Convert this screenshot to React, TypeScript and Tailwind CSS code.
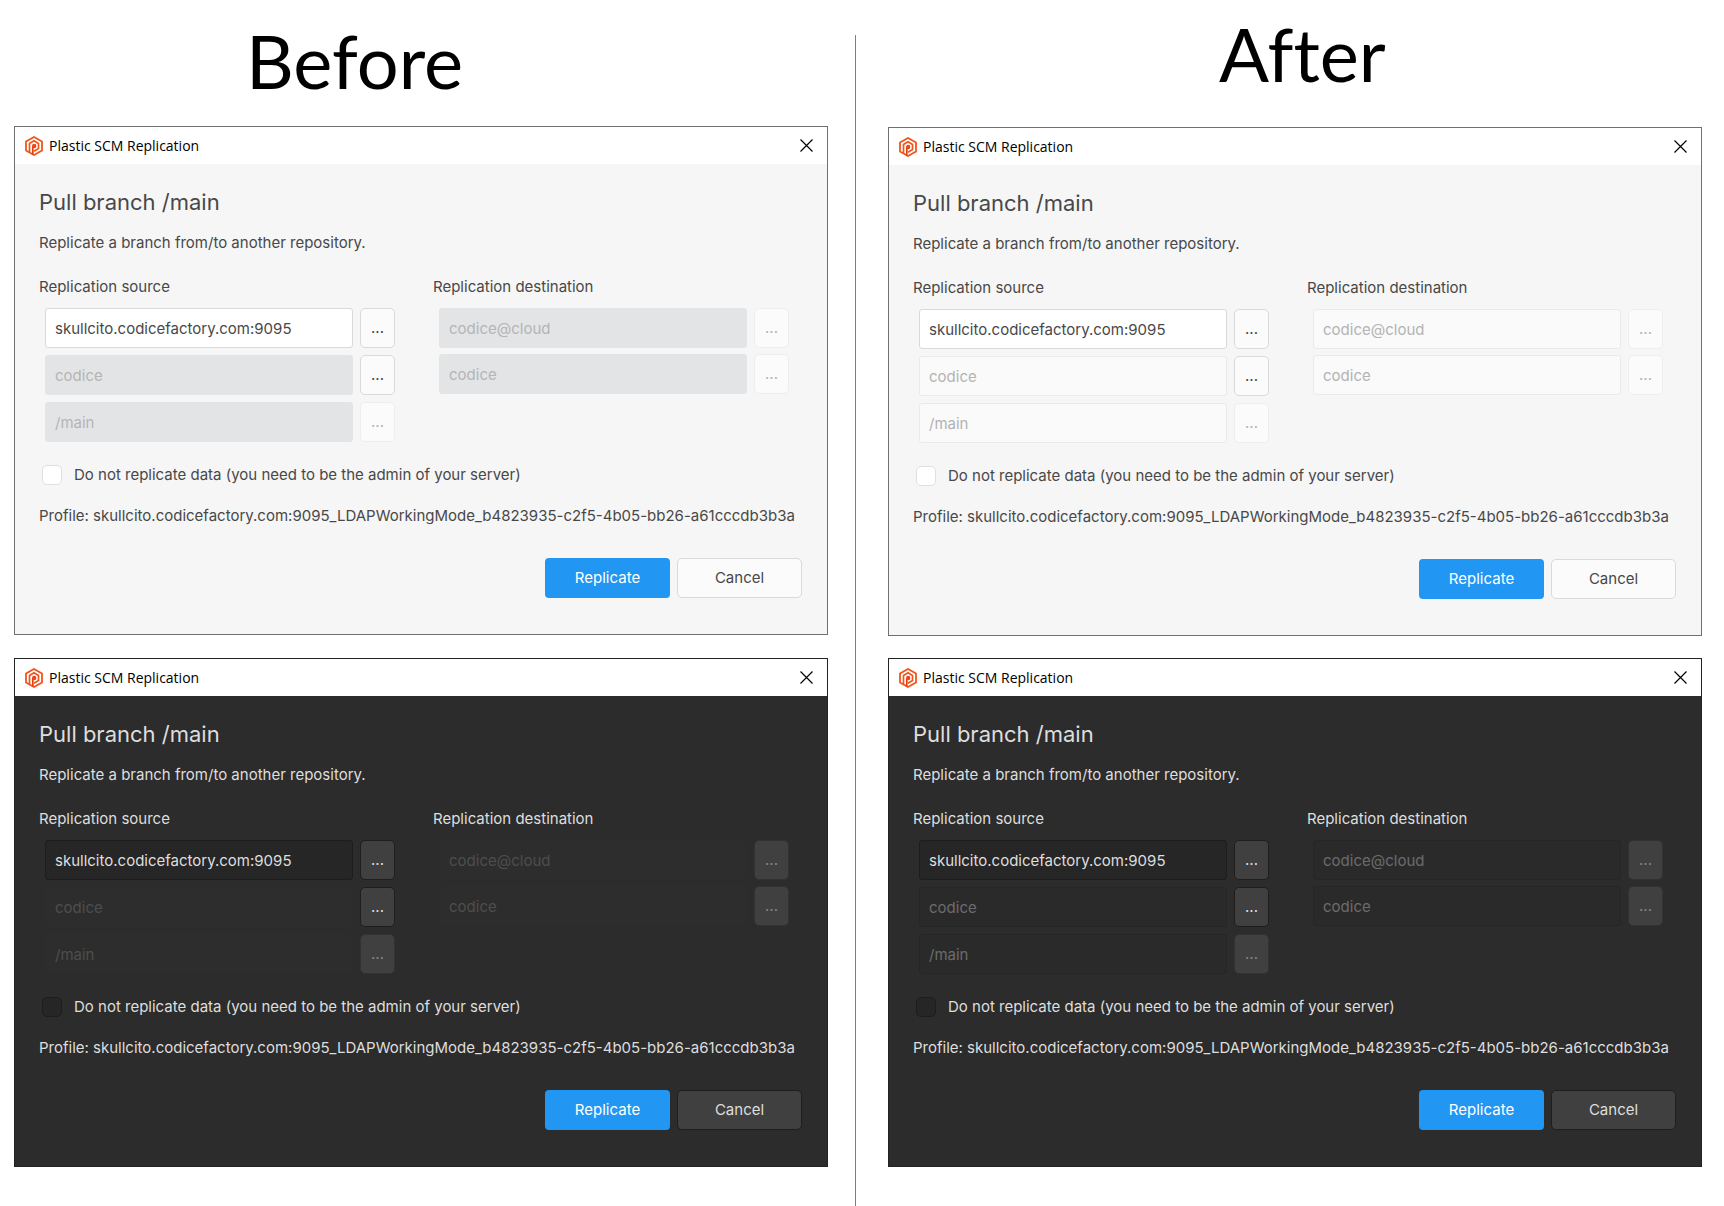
import { useId } from 'react'
import clsx from 'clsx'

type Theme = 'light' | 'dark'
type Variant = 'before' | 'after'

const INPUT_STYLES = {
  light: 'bg-white border-[#dadada] text-[#484848]',
  dark: 'bg-[#262626] border-[#1d1d1d] text-[#dedede]',
}

const DISABLED_INPUT_STYLES = {
  before: {
    light: 'bg-[#e3e4e5] border-[#e3e4e5] text-[#b4b5b6]',
    dark: 'bg-[#2d2d2d] border-[#2d2d2d] text-[#4e4e4e]',
  },
  after: {
    light: 'bg-[#fafafa] border-[#eaeaea] text-[#b3b3b3]',
    dark: 'bg-[#2a2a2a] border-[#262626] text-[#6c6c6c]',
  },
}

const BUTTON_STYLES = {
  light: 'bg-[#fbfbfb] border-[#dadada] text-[#484848] disabled:border-[#eeeeee] disabled:text-[#b3b3b3]',
  dark: 'bg-[#404040] border-[#1e1e1e] text-[#dedede] disabled:border-[#323232] disabled:text-[#858585]',
}

export default function App() {
  return (
    <main className="grid grid-cols-[856fr_868fr] min-h-screen bg-white font-['Inter',sans-serif]">
      <section className="flex pl-[14px]">
        <div className="flex-1 min-w-0 pr-[27px]">
          <h1 className="h-[126px] pl-[232px] pt-[17px] text-[74px] leading-[88px] text-black font-['Lato',sans-serif] [font-variant-ligatures:none]">Before</h1>
          <div className="flex flex-col gap-[23px]">
            <ReplicationDialog theme="light" variant="before" />
            <ReplicationDialog theme="dark" variant="before" />
          </div>
        </div>
        <div className="mt-[35px] w-px bg-[#7f7f7f]" />
      </section>

      <section className="pl-8 pr-[22px]">
        <h1 className="h-[127px] pl-[331px] pt-[10px] text-[74px] leading-[88px] text-black font-['Lato',sans-serif] [font-variant-ligatures:none]">After</h1>
        <div className="flex flex-col gap-[22px]">
          <ReplicationDialog theme="light" variant="after" />
          <ReplicationDialog theme="dark" variant="after" />
        </div>
      </section>
    </main>
  )
}

const ReplicationDialog = ({ theme, variant }: { theme: Theme; variant: Variant }) => {
  const checkboxId = useId()
  const light = theme === 'light'

  return (
    <article className={clsx('border', light ? 'border-[#707070]' : 'border-[#232323]')}>
      <header className="flex items-center justify-between h-[37px] pl-[10px] pr-[14px] bg-white">
        <div className="flex items-center gap-[6px]">
          <PlasticLogo />
          <span className="text-[14px] leading-5 text-black font-['Open_Sans',sans-serif]">Plastic SCM Replication</span>
        </div>
        <button type="button" aria-label="Close">
          <svg className="size-[13px]" viewBox="0 0 13 13" fill="none" stroke="#000" strokeWidth="1.2">
            <path d="M0.5 0.5L12.5 12.5M12.5 0.5L0.5 12.5" />
          </svg>
        </button>
      </header>

      <div
        className={clsx(
          'pl-6 pt-[22px] pb-[36px] text-[15px] leading-5',
          light ? 'bg-[#f6f6f6] text-[#484848]' : 'bg-[#2c2c2c] text-[#dedede]'
        )}
      >
        <h2 className="text-[22px] leading-8">Pull branch /main</h2>
        <p className="mt-[15px]">Replicate a branch from/to another repository.</p>

        <div className="grid grid-cols-2 mt-6">
          <fieldset>
            <legend>Replication source</legend>
            <div className="flex flex-col gap-[7px] mt-[11px] pl-[6px]">
              <FieldRow label="Source server" value="skullcito.codicefactory.com:9095" theme={theme} variant={variant} />
              <FieldRow label="Source repository" value="codice" theme={theme} variant={variant} disabled />
              <FieldRow label="Source branch" value="/main" theme={theme} variant={variant} disabled locked />
            </div>
          </fieldset>
          <fieldset>
            <legend>Replication destination</legend>
            <div className="flex flex-col gap-[6px] mt-[11px] pl-[6px]">
              <FieldRow label="Destination server" value="codice@cloud" theme={theme} variant={variant} disabled locked />
              <FieldRow label="Destination repository" value="codice" theme={theme} variant={variant} disabled locked />
            </div>
          </fieldset>
        </div>

        <div className="flex items-center gap-3 mt-[23px] pl-[3px]">
          <input
            id={checkboxId}
            type="checkbox"
            className={clsx(
              'appearance-none size-5 rounded-[5px] border',
              light ? 'bg-white border-[#dfdfdf]' : 'bg-[#262626] border-[#1d1d1d]'
            )}
          />
          <label htmlFor={checkboxId}>Do not replicate data (you need to be the admin of your server)</label>
        </div>

        <p className="mt-[21px] whitespace-nowrap">Profile: skullcito.codicefactory.com:9095_LDAPWorkingMode_b4823935-c2f5-4b05-bb26-a61cccdb3b3a</p>

        <div className="flex justify-end gap-[7px] mt-8 pr-[25px]">
          <button type="button" className="w-[125px] h-10 rounded-[4px] bg-[#2196f3] text-white">Replicate</button>
          <button type="button" className={clsx('w-[125px] h-10 rounded-[5px] border', BUTTON_STYLES[theme])}>Cancel</button>
        </div>
      </div>
    </article>
  )
}

type FieldRowProps = {
  label: string
  value: string
  theme: Theme
  variant: Variant
  disabled?: boolean
  locked?: boolean
}

const FieldRow = ({ label, value, theme, variant, disabled, locked }: FieldRowProps) => {
  return (
    <div className="flex gap-[7px] pr-[38px]">
      <input
        type="text"
        aria-label={label}
        defaultValue={value}
        disabled={disabled}
        className={clsx(
          'flex-1 min-w-0 h-10 px-[9px] rounded-[3px] border',
          disabled ? DISABLED_INPUT_STYLES[variant][theme] : INPUT_STYLES[theme]
        )}
      />
      <button type="button" disabled={locked} className={clsx('w-[35px] h-10 rounded-[5px] border', BUTTON_STYLES[theme])}>...</button>
    </div>
  )
}

const PlasticLogo = () => {
  return (
    <svg className="w-[18px] h-5" viewBox="0 0 18 20" fill="none" stroke="#f2541b">
      <path d="M9 1L17 5.5V14.5L9 19L1 14.5V5.5Z" strokeWidth="1.8" />
      <path d="M4.5 16V7.5L9 4.8L13.5 7.5V12.5L9 15.2" strokeWidth="1.7" />
      <path d="M7.8 18.5V10" stroke="#dd3f14" strokeWidth="1.7" />
      <circle cx="9.2" cy="10" r="2.2" fill="#e8481a" stroke="none" />
    </svg>
  )
}
